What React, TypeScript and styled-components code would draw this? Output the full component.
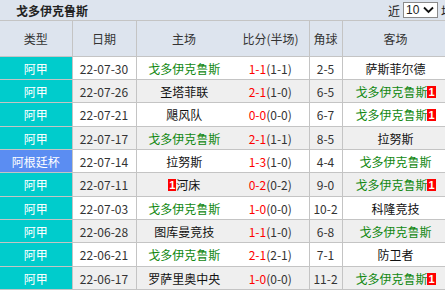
import React from 'react'
import styled, { createGlobalStyle } from 'styled-components'

const GlobalStyle = createGlobalStyle`
  html, body {
    margin: 0;
    padding: 0;
    background: #ffffff;
    overflow: hidden;
  }
  body {
    font-family: "Noto Sans CJK SC", "Liberation Sans", sans-serif;
    font-size: 12px;
    color: #333333;
  }
`

type Match = {
  league: string
  cup?: boolean
  date: string
  home: string
  homeUs?: boolean
  homeBadge?: boolean
  score: string
  half: string
  corner: string
  away: string
  awayUs?: boolean
  awayBadge?: boolean
}

const matches: Match[] = [
  { league: '阿甲', date: '22-07-30', home: '戈多伊克鲁斯', homeUs: true, score: '1-1', half: '(1-1)', corner: '2-5', away: '萨斯菲尔德' },
  { league: '阿甲', date: '22-07-26', home: '圣塔菲联', score: '2-1', half: '(1-0)', corner: '6-5', away: '戈多伊克鲁斯', awayUs: true, awayBadge: true },
  { league: '阿甲', date: '22-07-21', home: '飓风队', score: '0-0', half: '(0-0)', corner: '6-7', away: '戈多伊克鲁斯', awayUs: true, awayBadge: true },
  { league: '阿甲', date: '22-07-17', home: '戈多伊克鲁斯', homeUs: true, score: '2-1', half: '(1-1)', corner: '8-5', away: '拉努斯' },
  { league: '阿根廷杯', cup: true, date: '22-07-14', home: '拉努斯', score: '1-3', half: '(1-0)', corner: '4-4', away: '戈多伊克鲁斯', awayUs: true },
  { league: '阿甲', date: '22-07-11', home: '河床', homeBadge: true, score: '0-2', half: '(0-2)', corner: '9-0', away: '戈多伊克鲁斯', awayUs: true, awayBadge: true },
  { league: '阿甲', date: '22-07-03', home: '戈多伊克鲁斯', homeUs: true, score: '1-0', half: '(0-0)', corner: '10-2', away: '科隆竞技' },
  { league: '阿甲', date: '22-06-28', home: '图库曼竞技', score: '1-1', half: '(1-0)', corner: '6-8', away: '戈多伊克鲁斯', awayUs: true },
  { league: '阿甲', date: '22-06-21', home: '戈多伊克鲁斯', homeUs: true, score: '2-1', half: '(2-1)', corner: '7-1', away: '防卫者' },
  { league: '阿甲', date: '22-06-17', home: '罗萨里奥中央', score: '1-0', half: '(0-0)', corner: '11-2', away: '戈多伊克鲁斯', awayUs: true, awayBadge: true },
]

const Panel = styled.div`
  width: 453px;
`

const TitleBar = styled.div`
  height: 20px;
  background: #dde4ee;
  border-bottom: 1px solid #c4c4c4;
  display: flex;
  align-items: center;
  justify-content: space-between;
  padding-left: 16px;
`

const Title = styled.div`
  font-weight: bold;
  font-size: 12px;
  color: #222222;
`

const Picker = styled.div`
  display: flex;
  align-items: center;
  gap: 3px;
  font-size: 12px;
  color: #222222;
  white-space: nowrap;
`

const FakeSelect = styled.div`
  width: 35px;
  height: 16px;
  border: 1px solid #8a8a8a;
  background: #ffffff;
  display: flex;
  align-items: center;
  justify-content: space-between;
  padding: 0 3px 0 2px;
  box-sizing: border-box;
  font-family: "Liberation Sans", sans-serif;
  font-size: 12px;
`

const Table = styled.table`
  width: 449px;
  border-collapse: collapse;
  table-layout: fixed;
`

const HeadCell = styled.th<{ $noRight?: boolean }>`
  height: 35px;
  padding: 0;
  background: #dde4ee;
  font-weight: normal;
  color: #333333;
  border-bottom: 1px solid #c4c4c4;
  border-right: 1px solid ${p => (p.$noRight ? '#dde4ee' : '#c4c4c4')};
  text-align: center;
`

const Row = styled.tr<{ $alt: boolean; $tall: boolean }>`
  background: ${p => (p.$alt ? '#efefef' : '#ffffff')};
  height: ${p => (p.$tall ? '24px' : '23px')};
`

const Cell = styled.td<{ $noRight?: boolean }>`
  padding: 0;
  text-align: center;
  white-space: nowrap;
  overflow: hidden;
  border-bottom: 1px solid #c4c4c4;
  border-right: ${p => (p.$noRight ? 'none' : '1px solid #c4c4c4')};
`

const LeagueCell = styled(Cell)<{ $cup?: boolean }>`
  background: ${p => (p.$cup ? '#5b8df2' : '#00cccc')};
  color: #ffffff;
`

const NumCell = styled(Cell)`
  color: #333333;
`

const Team = styled.span<{ $us?: boolean }>`
  color: ${p => (p.$us ? '#118811' : '#111111')};
`

const Badge = styled.span`
  display: inline-block;
  background: #ff0000;
  color: #ffffff;
  font-weight: bold;
  font-family: "Liberation Sans", sans-serif;
  font-size: 11px;
  line-height: 12px;
  padding: 0 1px;
  vertical-align: 1px;
`

const Score = styled.span`
  color: #ff0000;
`

const Chevron = () => (
  <svg width="11" height="8" viewBox="0 0 11 8">
    <path d="M1 1.5 L5.5 6 L10 1.5" fill="none" stroke="#111" strokeWidth="1.8" />
  </svg>
)

export default function App() {
  return (
    <Panel>
      <GlobalStyle />
      <TitleBar>
        <Title>戈多伊克鲁斯</Title>
        <Picker>
          近
          <FakeSelect>
            10
            <Chevron />
          </FakeSelect>
          场
        </Picker>
      </TitleBar>
      <Table>
        <colgroup>
          <col style={{ width: 72 }} />
          <col style={{ width: 64 }} />
          <col style={{ width: 96 }} />
          <col style={{ width: 77 }} />
          <col style={{ width: 33 }} />
          <col style={{ width: 107 }} />
        </colgroup>
        <thead>
          <tr>
            <HeadCell>类型</HeadCell>
            <HeadCell>日期</HeadCell>
            <HeadCell $noRight>主场</HeadCell>
            <HeadCell>比分(半场)</HeadCell>
            <HeadCell>角球</HeadCell>
            <HeadCell>客场</HeadCell>
          </tr>
        </thead>
        <tbody>
          {matches.map((m, i) => (
            <Row key={m.date} $alt={i % 2 === 1} $tall={i % 3 === 2}>
              <LeagueCell $cup={m.cup}>{m.league}</LeagueCell>
              <NumCell>{m.date}</NumCell>
              <Cell $noRight>
                {m.homeBadge && <Badge>1</Badge>}
                <Team $us={m.homeUs}>{m.home}</Team>
              </Cell>
              <NumCell>
                <Score>{m.score}</Score>
                {m.half}
              </NumCell>
              <NumCell>{m.corner}</NumCell>
              <Cell>
                <Team $us={m.awayUs}>{m.away}</Team>
                {m.awayBadge && <Badge>1</Badge>}
              </Cell>
            </Row>
          ))}
        </tbody>
      </Table>
    </Panel>
  )
}
